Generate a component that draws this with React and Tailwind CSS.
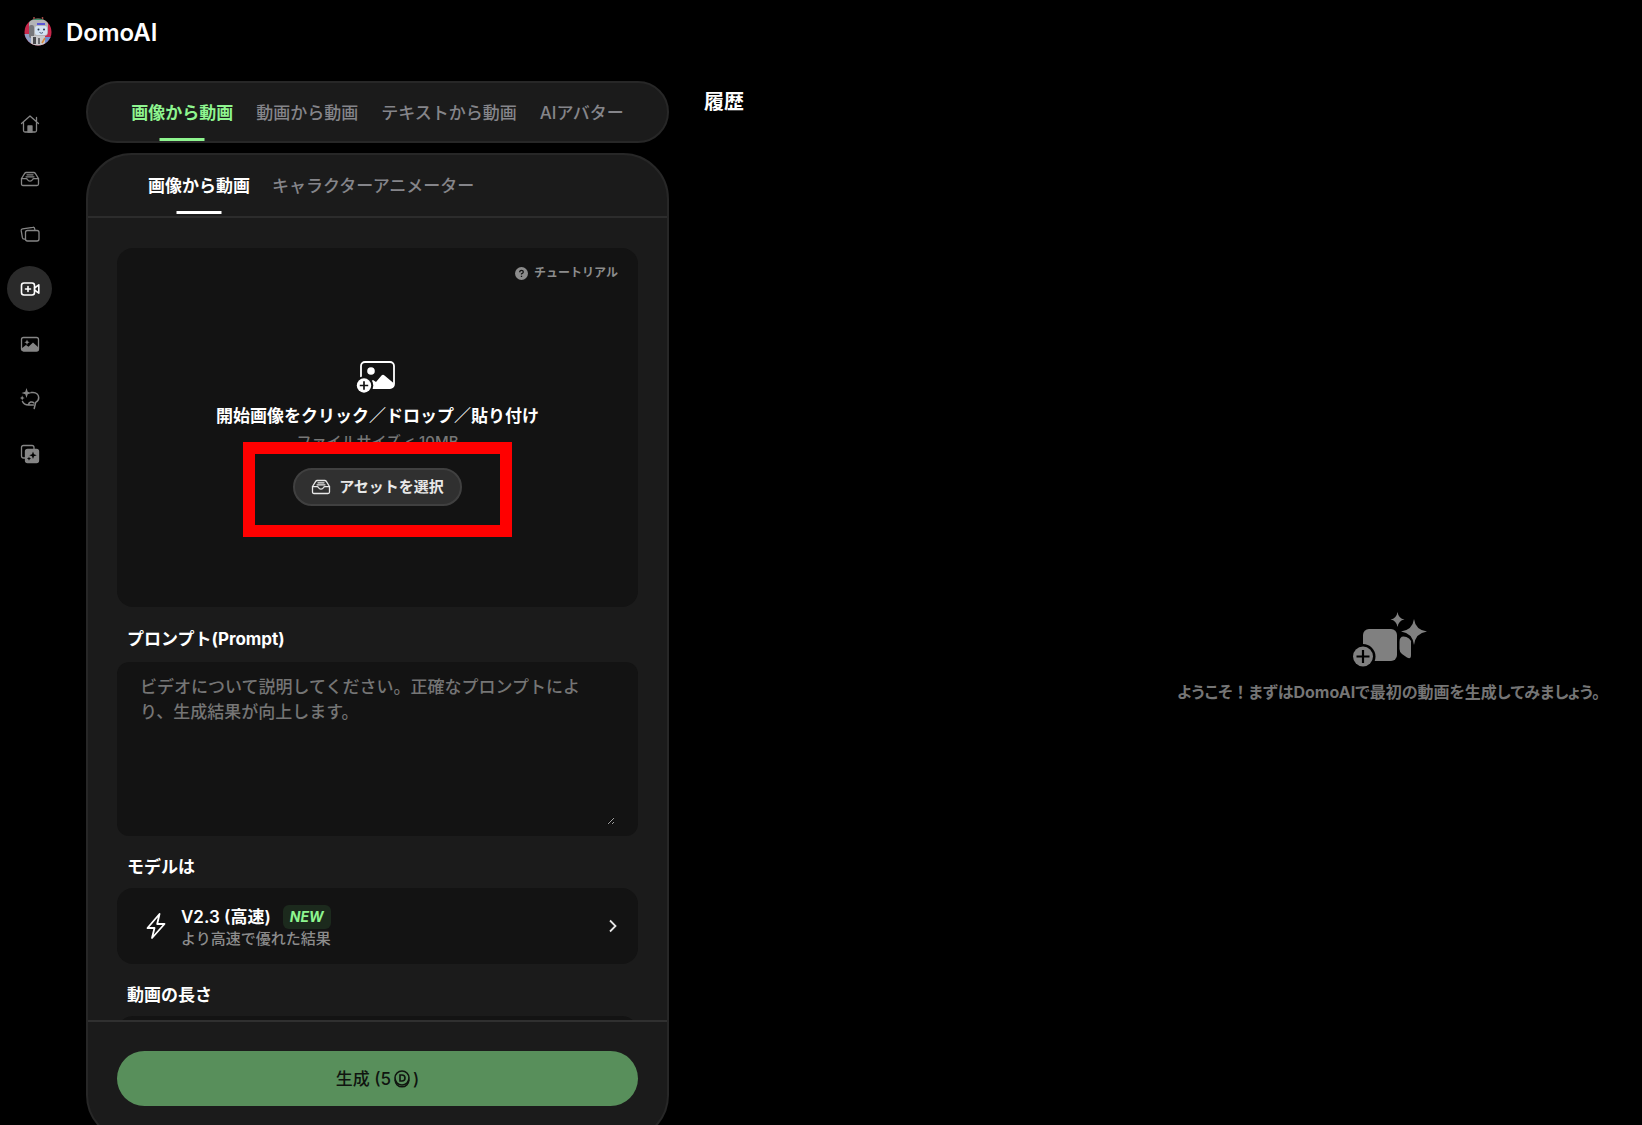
import { useState } from "react"

function Logo() {
  return (
    <svg width="28" height="30" viewBox="0 0 28 30" aria-hidden="true">
      <defs>
        <clipPath id="face">
          <circle cx="14" cy="16" r="13.5" />
        </clipPath>
      </defs>
      <path d="M10 1v5M18.500 1v5" stroke="#a04a44" strokeWidth="1.5" />
      <g clipPath="url(#face)">
        <rect width="28" height="30" fill="#c8284c" />
        <rect width="28" height="6" fill="#3f8f6c" />
        <rect y="18" width="7" height="12" fill="#8f9fc4" />
        <rect x="21" y="21" width="8" height="10" fill="#6f8fd0" />
        <rect x="5" y="4" width="19" height="16" rx="4" fill="#b4b4b6" />
        <rect x="5" y="9" width="5" height="13" rx="2" fill="#77777b" />
        <rect x="11" y="10" width="12" height="9" rx="2" fill="#d3e2f2" />
        <rect x="13" y="7" width="8" height="2" fill="#5a55d8" />
        <circle cx="14.5" cy="13.5" r="1" fill="#26364f" />
        <circle cx="20" cy="13.5" r="1" fill="#26364f" />
        <path d="M15.500 16.500q2 1.500 3.500 0" stroke="#4a5a78" fill="none" />
        <rect x="7" y="20" width="14" height="10" fill="#c9c9cc" />
        <rect x="9" y="21" width="3" height="7" fill="#4a4a4e" />
        <rect x="14" y="22" width="2" height="6" fill="#6a6a6e" />
        <path d="M18 27l3-5" stroke="#d98a3c" strokeWidth="1.500" />
      </g>
    </svg>
  )
}

function InboxIcon() {
  return (
    <svg width="20" height="20" viewBox="0 0 20 20" fill="none" stroke="currentColor" strokeWidth="1.3" strokeLinejoin="round" strokeLinecap="round">
      <path d="M1.500 9.500 4.700 4.300Q5.200 3.500 6.200 3.500h7.600q1 0 1.500.8l3.200 5.200v5.500q0 1.500-1.500 1.500H3q-1.500 0-1.500-1.500z" />
      <path d="M1.500 9.700h4.700q.8 0 1.200.8.900 1.700 2.600 1.700t2.600-1.700q.4-.8 1.200-.8h4.700M7 5.800h6M6 7.800h8" />
    </svg>
  )
}

function HomeIcon() {
  return (
    <svg width="20" height="20" viewBox="0 0 20 20" fill="none" stroke="currentColor" strokeWidth="1.300" strokeLinejoin="round" strokeLinecap="round">
      <path d="M1.500 9.500 10 2l8.500 7.500M3.500 8v8.500Q3.500 18 5 18h10q1.500 0 1.500-1.500V8M16.500 7V3.500" />
      <path d="M8 18v-6h4v6z" fill="currentColor" />
    </svg>
  )
}

function CardsIcon() {
  return (
    <svg width="20" height="20" viewBox="0 0 20 20" fill="none" stroke="currentColor" strokeWidth="1.300" strokeLinejoin="round" strokeLinecap="round">
      <rect x="5.500" y="6.500" width="13.500" height="10.500" rx="2" />
      <path d="M15 6.300 14.600 4.600Q14.300 3 12.800 3.300L2.600 4.900Q1 5.200 1.200 6.700l1.200 7q.3 1.400 1.700 1.400h1.300" />
    </svg>
  )
}

function VideoIcon() {
  return (
    <svg width="20" height="20" viewBox="0 0 20 20" fill="none" stroke="currentColor" strokeWidth="1.600" strokeLinejoin="round" strokeLinecap="round">
      <rect x="1.500" y="4" width="13" height="12" rx="2.500" />
      <path d="M8 7.500v5M5.500 10h5M14.500 9l4.300-3.200v8.400L14.500 11" />
    </svg>
  )
}

function ImageIcon() {
  return (
    <svg width="20" height="20" viewBox="0 0 20 20" fill="none" stroke="currentColor" strokeWidth="1.300" strokeLinejoin="round">
      <rect x="1.500" y="3.500" width="17" height="13.500" rx="2" />
      <path d="M1.500 14.500 6 11l2.500 1.800L13 8.500l5.500 5V15q0 2-2 2h-13q-2 0-2-2z" fill="currentColor" stroke="none" />
      <path d="M7 5.500l.8 1.900 1.900.8-1.900.8L7 10.900 6.200 9l-1.900-.8 1.900-.8z" fill="currentColor" stroke="none" />
    </svg>
  )
}

function EffectIcon() {
  return (
    <svg width="20" height="22" viewBox="0 0 20 22" fill="none" stroke="currentColor" strokeWidth="1.500" strokeLinecap="round" strokeLinejoin="round">
      <path d="M11 4.500h2c3.400 0 5.700 2.200 5.700 5.300 0 2.200-1.200 3.700-3 4.600l-1.500 6.100" />
      <path d="M2.500 13.500c1 2.300 3.200 3.500 6 3.500h5M8.500 16.500c.5-2.500 3.500-3.500 5.500-1.500" />
      <path d="M6.500 0l1.200 3.800 3.800 1.200-3.800 1.200-1.200 3.800-1.200-3.800L1.500 5l3.800-1.200z" fill="currentColor" stroke="none" />
      <path d="M2.200 7.500l.7 1.800 1.800.7-1.800.7-.7 1.800-.7-1.800-1.500-.7 1.500-.7z" fill="currentColor" stroke="none" />
    </svg>
  )
}

function LayersIcon() {
  return (
    <svg width="20" height="20" viewBox="0 0 20 20" fill="none" stroke="currentColor" strokeWidth="1.300">
      <path d="M5 14H3.500q-2 0-2-2V3.500q0-2 2-2H12q2 0 2 2V5" />
      <rect x="5.500" y="5.500" width="13" height="13" rx="2" fill="currentColor" />
      <path d="M13 7.500l1 2.700 2.700 1-2.700 1-1 2.700-1-2.700-2.700-1 2.700-1z" fill="#000" stroke="none" />
      <path d="M9 12.500l.6 1.500 1.500.6-1.500.6L9 16.700l-.6-1.500-1.500-.6 1.500-.6z" fill="#000" stroke="none" />
    </svg>
  )
}

function UploadIcon() {
  return (
    <svg width="44" height="34" viewBox="0 0 44 34" fill="none">
      <rect x="5" y="2" width="33" height="26" rx="4" stroke="#fff" strokeWidth="1.800" />
      <circle cx="15" cy="11" r="3.800" fill="#fff" />
      <path d="M11 24l6-4 3 2 5.500-6.500q1.500-1.500 3 0l9 7.500v2q0 3-3 3H12z" fill="#fff" />
      <circle cx="8" cy="25.500" r="9.300" fill="#131313" />
      <circle cx="8" cy="25.500" r="7.200" fill="#fff" />
      <path d="M8 21.300v8.400M3.800 25.500h8.400" stroke="#131313" strokeWidth="1.700" />
    </svg>
  )
}

function EmptyIcon() {
  return (
    <svg width="76" height="58" viewBox="0 0 76 58" fill="#808080">
      <rect x="12" y="19" width="34" height="32" rx="6" />
      <path d="M48.500 32q0-5.500 4-5.500 3 0 5.500 2t2 4.500v12q0 5-4 2.500l-5-3.500q-2.500-2-2.500-5z" />
      <path d="M63 9q1.500 11 13 12.500Q64.500 23 63 35q-1.500-12-13-13.500Q61.500 20 63 9z" />
      <path d="M46.500 2q1 6.500 7 7.500-6 1-7 7.500-1-6.500-7-7.500 6-1 7-7.500z" />
      <circle cx="12" cy="46.500" r="12.500" fill="#000" />
      <circle cx="12" cy="46.500" r="10" />
      <path d="M12 40v13M5.500 46.500h13" stroke="#000" strokeWidth="2.200" />
    </svg>
  )
}

function CoinIcon() {
  return (
    <svg width="18" height="18" viewBox="0 0 17 18" fill="none" stroke="currentColor" strokeWidth="1.600">
      <circle cx="8.500" cy="8" r="7" />
      <path d="M1.500 9.500c.3 4.500 3.300 7.300 7 7.300s6.700-2.800 7-7.300" />
      <path d="M6.500 5h2q3 0 3 3t-3 3h-2z" />
    </svg>
  )
}

const menu = [
  { name: "ホーム", icon: HomeIcon },
  { name: "アセット", icon: InboxIcon },
  { name: "コレクション", icon: CardsIcon },
  { name: "動画", icon: VideoIcon },
  { name: "画像", icon: ImageIcon },
  { name: "エフェクト", icon: EffectIcon },
  { name: "テンプレート", icon: LayersIcon },
]

const modes = ["画像から動画", "動画から動画", "テキストから動画", "AIアバター"]
const subModes = ["画像から動画", "キャラクターアニメーター"]

export default function App() {
  const [page, setPage] = useState(3)
  const [mode, setMode] = useState(0)
  const [subMode, setSubMode] = useState(0)

  return (
    <div className="flex h-screen flex-col overflow-hidden bg-black font-['Inter','Noto_Sans_CJK_JP',sans-serif] text-[17px] leading-6 text-white">
      <header className="flex h-[62px] shrink-0 items-center gap-[14px] pl-6">
        <Logo />
        <h1 className="pt-1 text-2xl font-semibold">DomoAI</h1>
      </header>

      <div className="flex min-h-0 flex-1">
        <nav className="flex w-[86px] shrink-0 flex-col gap-[10px] pl-[7px] pt-[39px]">
          {menu.map((item, i) => (
            <button
              key={item.name}
              aria-label={item.name}
              onClick={() => setPage(i)}
              className={`flex size-[45px] items-center justify-center rounded-full ${page === i ? "bg-[#2a2a2a] text-white" : "text-[#858585]"}`}
            >
              <item.icon />
            </button>
          ))}
        </nav>

        <main className="-mb-4 flex w-[583px] shrink-0 flex-col gap-[10px] pt-[19px]">
          <div className="flex h-[62px] shrink-0 justify-center gap-[23px] rounded-full border-2 border-[#272727] bg-[#1b1b1b]">
            {modes.map((name, i) => (
              <button
                key={name}
                onClick={() => setMode(i)}
                className={`relative whitespace-nowrap pt-[2px] ${mode === i ? "font-bold text-[#8ef58f]" : "font-medium text-[#85858a]"}`}
              >
                {name}
                {mode === i && <span className="absolute bottom-0 left-1/2 h-[3px] w-[45px] -translate-x-1/2 bg-[#8ef58f]" />}
              </button>
            ))}
          </div>

          <section className="flex min-h-0 flex-1 flex-col overflow-hidden rounded-[46px] border-2 border-[#272727] bg-[#1b1b1b]">
            <div className="flex h-[63px] shrink-0 gap-[22px] border-b-2 border-[#2c2c2c] pl-[60px]">
              {subModes.map((name, i) => (
                <button
                  key={name}
                  onClick={() => setSubMode(i)}
                  className={`relative whitespace-nowrap ${subMode === i ? "font-bold text-white" : "font-medium text-[#85858a]"}`}
                >
                  {name}
                  {subMode === i && <span className="absolute bottom-[2px] left-1/2 h-[3px] w-[45px] -translate-x-1/2 bg-white" />}
                </button>
              ))}
            </div>

            <div className="min-h-0 flex-1 overflow-hidden px-[29px] pt-[30px]">
              <div className="relative flex h-[359px] flex-col items-center rounded-2xl bg-[#131313] pt-[112px]">
                <a href="#" className="absolute right-5 top-[13px] flex items-center gap-[6px] text-xs leading-6 font-bold text-[#8c8c8c]">
                  <svg width="13" height="13" viewBox="0 0 13 13">
                    <circle cx="6.500" cy="6.500" r="6.500" fill="currentColor" />
                    <path d="M4.700 5.200q0-1.900 1.800-1.900t1.800 1.600q0 1-1.800 1.900v.7M6.500 8.700v1.300" stroke="#131313" strokeWidth="1.300" fill="none" />
                  </svg>
                  チュートリアル
                </a>
                <UploadIcon />
                <p className="mt-[10px] font-bold">開始画像をクリック／ドロップ／貼り付け</p>
                <p className="mt-1 text-[15px] leading-5 font-medium text-[#777]">ファイルサイズ &lt; 10MB</p>
                <button className="mt-4 flex h-[38px] items-center gap-2 rounded-full border-2 border-[#404040] bg-[#303030] px-4 text-[15px] font-bold text-[#e8e8e8]">
                  <InboxIcon />
                  アセットを選択
                </button>
                {/* highlight frame over the asset button */}
                <div className="pointer-events-none absolute left-[126px] top-[194px] h-[95px] w-[269px] border-[12px] border-[#ff0000]" />
              </div>

              <label htmlFor="prompt" className="mt-5 block pl-[10px] font-bold">
                プロンプト(Prompt)
              </label>
              <div className="mt-[11px] rounded-xl bg-[#131313] pb-[11px] pl-[23px] pr-[23px] pt-[13px]">
                <textarea
                  id="prompt"
                  placeholder="ビデオについて説明してください。正確なプロンプトにより、生成結果が向上します。"
                  className="block h-[150px] w-full resize bg-transparent pr-[18px] leading-[25px] font-medium text-white outline-none placeholder:text-[#757575]"
                />
              </div>

              <h2 className="mt-[19px] pl-[10px] font-bold">モデルは</h2>
              <button className="mt-[9px] flex h-[76px] w-full items-center rounded-2xl bg-[#131313] pl-[29px] pr-[20px] text-left">
                <svg width="20" height="28" viewBox="0 0 20 28" fill="none" stroke="#fff" strokeWidth="1.800" strokeLinejoin="round">
                  <path d="M13.500 2 1.500 16h7L6 26 18.500 12h-7.300z" />
                </svg>
                <span className="ml-[15px] flex-1 pt-[2px]">
                  <span className="flex items-center gap-3">
                    <span className="font-semibold">V2.3 (高速)</span>
                    <span className="rounded-md bg-[#1c2a1d] px-[7px] text-sm leading-6 font-bold italic text-[#8ef58f]">NEW</span>
                  </span>
                  <span className="block text-[15px] leading-5 font-medium text-[#8c8c8c]">より高速で優れた結果</span>
                </span>
                <svg width="10" height="14" viewBox="0 0 10 14" fill="none" stroke="#e5e5e5" strokeWidth="1.800">
                  <path d="M2 1.500 7.500 7 2 12.500" />
                </svg>
              </button>

              <h2 className="mt-[19px] pl-[10px] font-bold">動画の長さ</h2>
              <div className="mt-[9px] h-[76px] rounded-2xl bg-[#131313]" />
            </div>

            <div className="shrink-0 border-t-2 border-[#303030] px-[29px] pb-[33px] pt-[29px]">
              <button className="flex h-[55px] w-full items-center justify-center rounded-full bg-[#588f5b] font-medium text-[#101510]">
                生成 (5<span className="px-[2px]"><CoinIcon /></span>)
              </button>
            </div>
          </section>
        </main>

        <aside className="flex min-w-0 flex-1 flex-col pl-[35px] pr-[42px] pt-7">
          <h2 className="text-[20px] font-bold">履歴</h2>
          <div className="flex flex-1 flex-col items-end justify-center">
            <div className="mt-[74px] flex flex-col items-center gap-3">
              <EmptyIcon />
              <p className="whitespace-nowrap text-base font-bold text-[#757575] [font-feature-settings:'palt']">
                ようこそ<span className="[font-feature-settings:normal]">！</span>まずはDomoAIで最初の動画を生成してみましょう。
              </p>
            </div>
          </div>
        </aside>
      </div>
    </div>
  )
}
